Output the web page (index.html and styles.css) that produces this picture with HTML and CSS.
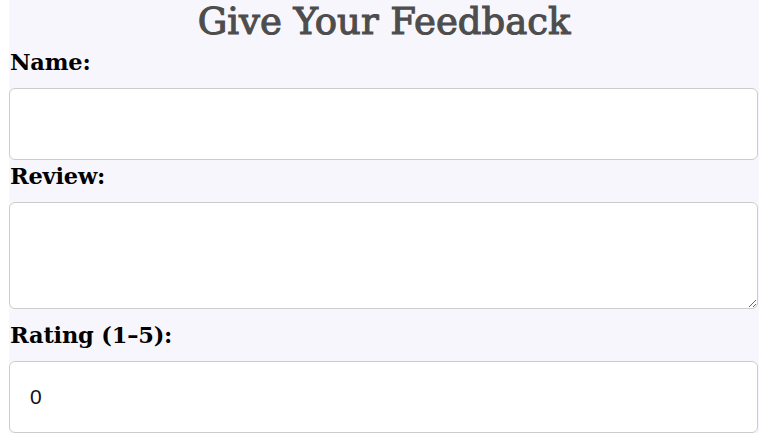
FILE: index.html
```html
<!DOCTYPE html>
<html lang="en">
<head>
<meta charset="utf-8">
<title>Give Your Feedback</title>
<link rel="stylesheet" href="styles.css">
</head>
<body>
<form class="feedback">
  <h1 class="title">Give Your Feedback</h1>
  <label class="label" for="name">Name:</label>
  <input class="field" id="name" type="text">
  <label class="label" for="review">Review:</label>
  <textarea class="field area" id="review"></textarea>
  <label class="label" for="rating">Rating (1–5):</label>
  <input class="field" id="rating" type="number" value="0" min="0" max="5">
</form>
</body>
</html>
```

FILE: styles.css
```css
html, body {
  margin: 0;
  padding: 0;
  background: #ffffff;
}
.feedback {
  display: flex;
  flex-direction: column;
  width: 750px;
  height: 433px;
  margin-left: 9px;
  background: #f8f6fd;
  font-family: "DejaVu Serif", "Liberation Serif", serif;
}
.title {
  margin: 0;
  height: 46px;
  padding-bottom: 2px;
  box-sizing: border-box;
  font-size: 37px;
  line-height: 44px;
  font-weight: normal;
  -webkit-text-stroke: 1.1px #4d4d4d;
  text-align: center;
  color: #4d4d4d;
}
.label {
  display: block;
  padding: 4px 0 14px 1px;
  line-height: 24px;
  font-size: 22.5px;
  font-weight: bold;
  letter-spacing: -0.2px;
  color: #000;
}
.field {
  box-sizing: border-box;
  width: 749px;
  height: 72px;
  margin: 0;
  padding: 0 20px;
  border: 1px solid #cccccc;
  border-radius: 6px;
  background: #fff;
  font-family: "Liberation Sans", Arial, sans-serif;
  font-size: 21px;
  color: #111;
  outline: none;
}
.area {
  height: 107px;
  margin-bottom: 10px;
  padding: 10px 20px;
}
```
